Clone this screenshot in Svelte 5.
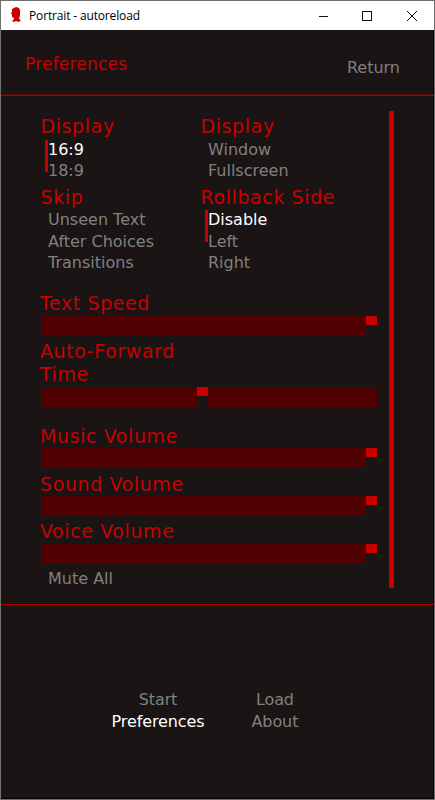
<script>
    let groups = [
        { title: 'Display', options: ['16:9', '18:9'], selected: '16:9' },
        { title: 'Display', options: ['Window', 'Fullscreen'], selected: null },
        { title: 'Skip', options: ['Unseen Text', 'After Choices', 'Transitions'], selected: null },
        { title: 'Rollback Side', options: ['Disable', 'Left', 'Right'], selected: 'Disable' },
    ];

    let sliders = [
        { id: 'text', label: 'Text Speed', value: 100 },
        { id: 'auto', label: 'Auto-Forward Time', value: 48 },
        { id: 'music', label: 'Music Volume', value: 100 },
        { id: 'sound', label: 'Sound Volume', value: 100 },
        { id: 'voice', label: 'Voice Volume', value: 100 },
    ];

    let nav = [
        ['Start', 'Preferences'],
        ['Load', 'About'],
    ];
    let current = 'Preferences';
    let muted = false;

    function select(group, option) {
        group.selected = option;
        groups = groups;
    }
</script>

<div class="window">
    <div class="titlebar">
        <svg class="logo" width="11" height="16" viewBox="0 0 11 16">
            <path d="M3 1 5 0 8 1 9 3 9 9 8 11 9 13 10 14 7 15 5 14 3 15 1 14 3 12 3 11 1 10 1 8 0 6 1 5 1 2Z" fill="#c80000" />
        </svg>
        <span class="caption">Portrait - autoreload</span>
        <svg class="controls" width="100" height="12" viewBox="0 0 100 12" fill="none" stroke="#111">
            <path d="M1 6.5h9M44.5 1.5h9v9h-9z" shape-rendering="crispEdges" />
            <path d="M89 1l10 10M99 1l-10 10" />
        </svg>
    </div>

    <header>
        <h1>Preferences</h1>
        <button class="return">Return</button>
    </header>

    <main>
        <div class="prefs">
            <div class="groups">
                {#each groups as group}
                    <section>
                        <h2>{group.title}</h2>
                        {#each group.options as option}
                            <button
                                class="option"
                                class:selected={group.selected === option}
                                on:click={() => select(group, option)}>{option}</button
                            >
                        {/each}
                    </section>
                {/each}
            </div>

            {#each sliders as slider}
                <div class="slider {slider.id}">
                    <h2>{slider.label}</h2>
                    <div class="bar">
                        <div class="fill" style="flex-grow:{slider.value}"></div>
                        <div class="thumb"></div>
                        <div class="fill" style="flex-grow:{100 - slider.value}"></div>
                    </div>
                </div>
            {/each}
            <button class="option mute" class:selected={muted} on:click={() => (muted = !muted)}>Mute All</button>
        </div>
        <div class="scrollbar"></div>
    </main>

    <nav>
        {#each nav as column}
            <div class="column">
                {#each column as item}
                    <button class:current={item === current}>{item}</button>
                {/each}
            </div>
        {/each}
    </nav>
</div>

<style>
    :global(body) {
        margin: 0;
        background: #1a1414;
    }

    .window {
        box-sizing: border-box;
        width: 435px;
        height: 800px;
        border: 1px solid #707070;
        background: #1a1414;
        box-shadow: inset -1px -1px #000;
        font-family: 'DejaVu Sans', sans-serif;
        overflow: hidden;
    }

    .titlebar {
        display: flex;
        align-items: center;
        height: 29px;
        padding: 0 16px 0 10px;
        box-sizing: border-box;
        background: #fff;
    }

    .logo {
        margin-top: -2px;
    }

    .caption {
        flex: 1;
        margin-left: 7px;
        font: 12px 'Open Sans', sans-serif;
        letter-spacing: -0.15px;
        color: #000;
    }

    header {
        display: flex;
        justify-content: space-between;
        box-sizing: border-box;
        height: 66px;
        padding: 23px 34px 0 24px;
        border-bottom: 1px solid #a80000;
        box-shadow: inset 0 -1px #600404;
    }

    h1,
    h2 {
        margin: 0;
        font-weight: normal;
        color: #c80000;
    }

    h1 {
        font-size: 17px;
        line-height: 23px;
        letter-spacing: 0.2px;
    }

    h2 {
        width: 160px;
        font-size: 19px;
        line-height: 23px;
        letter-spacing: 0.6px;
    }

    button {
        display: block;
        border: 0;
        padding: 0;
        background: none;
        font-family: inherit;
        font-size: 16px;
        line-height: 21.5px;
        color: #808080;
    }

    .return {
        align-self: flex-start;
        margin-top: 4px;
    }

    main {
        display: flex;
        box-sizing: border-box;
        height: 509px;
        padding: 15px 40px 16px 39px;
        border-bottom: 1px solid #b00000;
    }

    .prefs {
        width: 337px;
        padding-top: 4px;
    }

    .groups {
        display: grid;
        grid-template-columns: 160px 177px;
        row-gap: 4px;
        height: 177px;
        align-content: start;
    }

    .groups h2 {
        margin-bottom: 0.5px;
        padding-left: 0.5px;
        white-space: nowrap;
    }

    .option {
        position: relative;
        padding-left: 8px;
    }

    .selected,
    .current {
        color: #fff;
    }

    .selected::before {
        content: '';
        position: absolute;
        left: 4.5px;
        top: 1px;
        width: 3.5px;
        height: 32px;
        background: #c80000;
    }

    .slider {
        margin-bottom: 4px;
    }

    .slider.auto {
        margin-bottom: 18px;
    }

    .bar {
        display: flex;
        height: 20px;
        margin: 1px 0 0 1px;
    }

    .slider.music .bar {
        margin-top: 0;
        margin-bottom: 5px;
    }

    .slider.sound .bar {
        margin-top: 0;
    }

    .fill {
        flex-basis: 0;
        background: #500000;
    }

    .thumb {
        width: 11px;
        height: 9px;
        background: #c80000;
    }

    .scrollbar {
        width: 5px;
        height: 477px;
        margin-left: 12px;
        background: #c80000;
    }

    nav {
        display: flex;
        gap: 47px;
        padding: 84px 0 0 110.5px;
    }

    nav button {
        letter-spacing: -0.1px;
    }

    .column {
        display: flex;
        flex-direction: column;
        align-items: center;
    }
</style>
